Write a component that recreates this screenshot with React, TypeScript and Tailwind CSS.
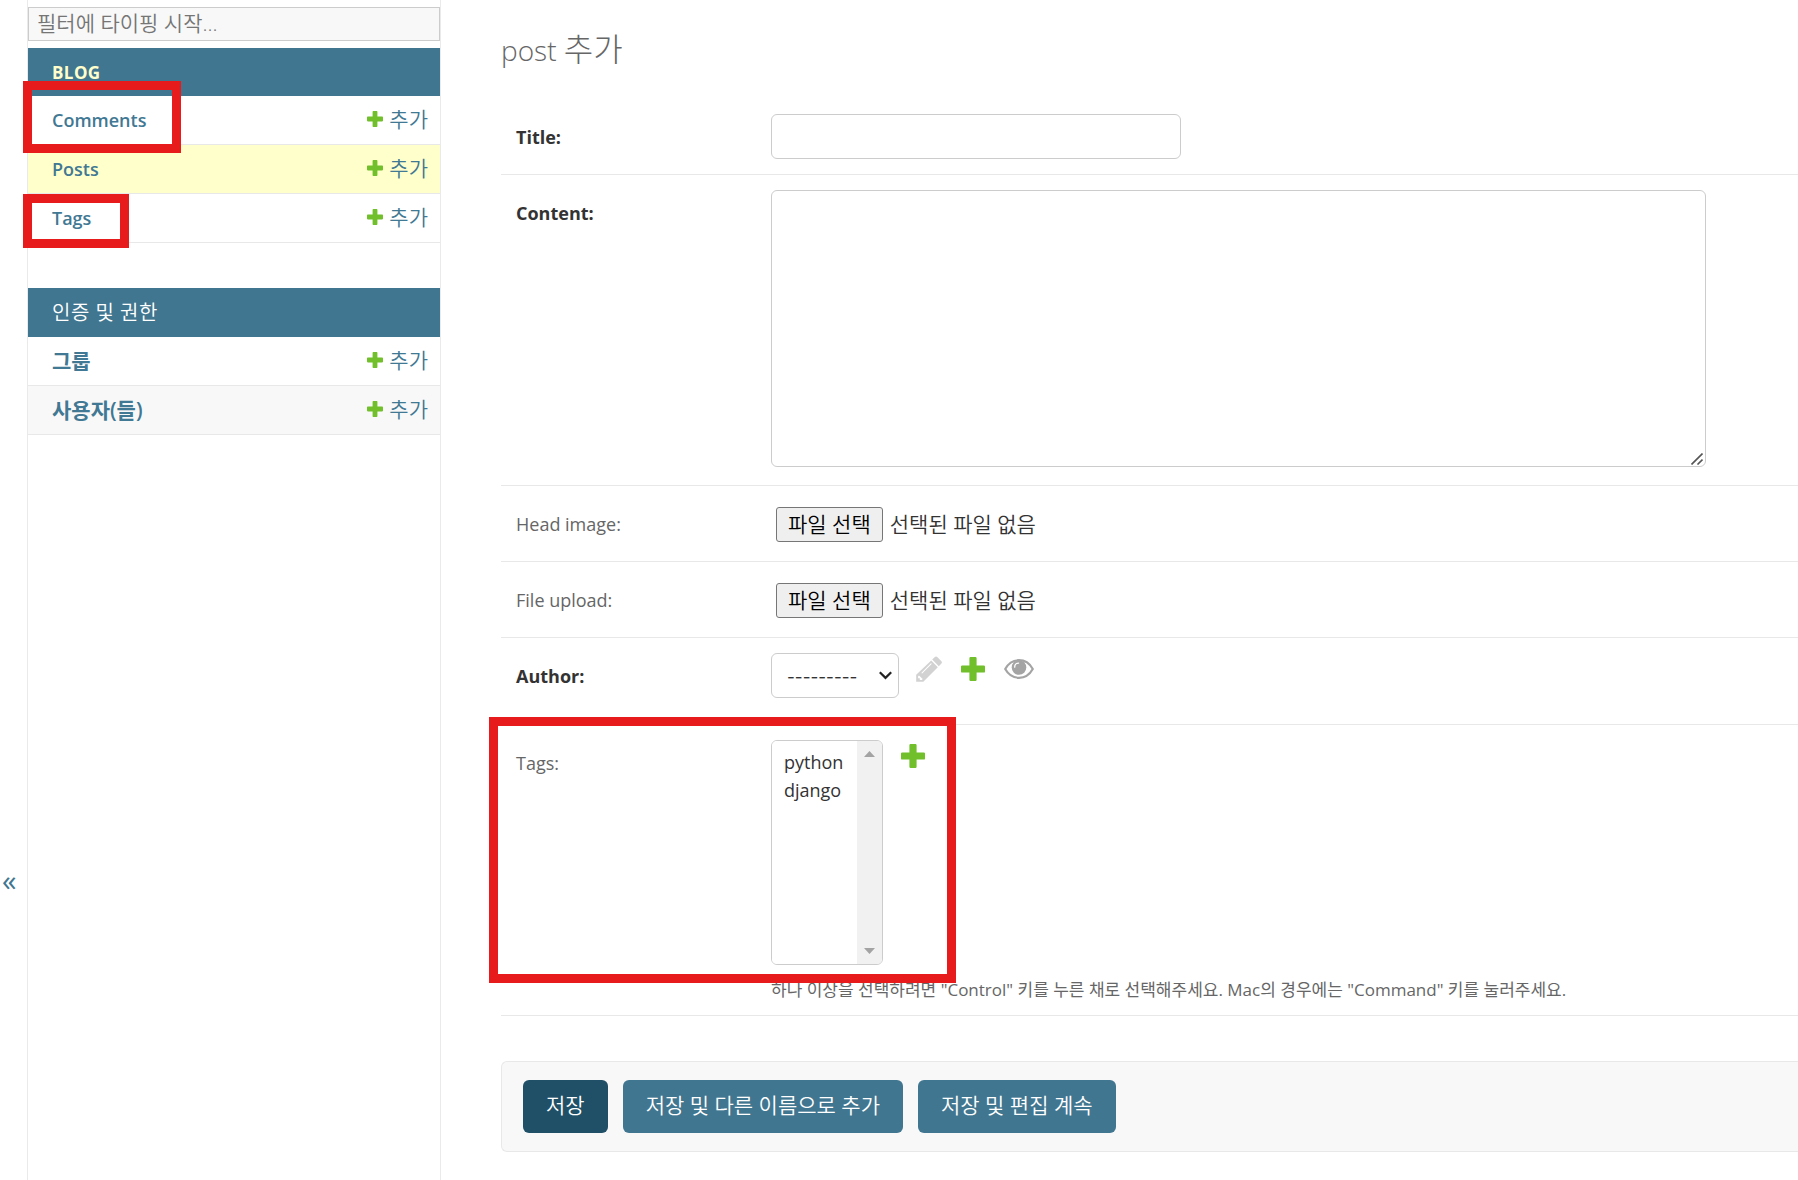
import { useRef, type ReactNode } from 'react';
import clsx from 'clsx';

function PlusIcon({ className }: { className?: string }) {
  return (
    <svg className={className} viewBox="0 0 24 24" fill="#70bf2b" aria-hidden="true">
      <path d="M9.6 0h4.8a1.2 1.2 0 0 1 1.2 1.2v7.2h7.2A1.2 1.2 0 0 1 24 9.6v4.8a1.2 1.2 0 0 1-1.2 1.2h-7.2v7.2a1.2 1.2 0 0 1-1.2 1.2H9.6a1.2 1.2 0 0 1-1.2-1.2v-7.2H1.2A1.2 1.2 0 0 1 0 14.4V9.6a1.2 1.2 0 0 1 1.2-1.2h7.2V1.2A1.2 1.2 0 0 1 9.6 0z" />
    </svg>
  );
}

function PencilIcon() {
  return (
    <svg className="h-[26px] w-[26px]" viewBox="0 0 26 26" aria-hidden="true">
      <path
        fill="#d2d2d2"
        d="M18.6 1.2a2 2 0 0 1 2.9 0l3.7 3.7a2 2 0 0 1 0 2.9l-2.4 2.4-6.6-6.6zM15.2 4.6l6.6 6.6L7.3 25.7H.2v-7zM3 19.4l-.9.9v2h1.7v1.6h2l.9-.9zM15.2 7.3c-.2 0-.4.1-.5.2l-9 9c-.5.6.2 1.2.7.7l9-9c.4-.4.2-.9-.2-.9z"
      />
    </svg>
  );
}

function EyeIcon() {
  return (
    <svg className="h-5 w-[30px]" viewBox="0 0 30 20" fill="none" aria-hidden="true">
      <path
        stroke="#a4a4a4"
        strokeWidth="2.2"
        strokeLinejoin="round"
        d="M1.2 10C4.2 4.7 9.2 1.2 15 1.2S25.8 4.7 28.8 10C25.8 15.3 20.8 18.8 15 18.8S4.2 15.3 1.2 10z"
      />
      <circle cx="15" cy="8.5" r="7.3" fill="#a4a4a4" />
      <path stroke="#fff" strokeWidth="1.3" strokeLinecap="round" d="M10.7 8.2c0-2.5 1.5-4 3.9-4.1" />
    </svg>
  );
}

// Red frame used to point at a part of the page
function Marker({ className }: { className: string }) {
  return (
    <span
      aria-hidden="true"
      className={clsx('pointer-events-none absolute z-10 border-9 border-[#e71b1b]', className)}
    />
  );
}

type Model = { name: string; korean?: boolean; current?: boolean; striped?: boolean; marker?: string };

function AppModule({ caption, current, models }: { caption: string; current?: boolean; models: Model[] }) {
  return (
    <table className="w-full border-separate border-spacing-0">
      <caption
        className={clsx(
          'bg-[#417690] pl-6 text-left leading-[49px] tracking-wide',
          current ? 'h-12 text-[17px] font-bold text-[#ffffcc]' : 'h-[49px] text-[20px] font-[350] text-white',
        )}
      >
        <a href="#app">{caption}</a>
      </caption>
      <tbody>
        {models.map((model) => (
          <tr
            key={model.name}
            className={clsx(
              'h-[49px] text-[#417893]',
              model.current && 'bg-[#ffffcc]',
              model.striped && 'bg-[#f8f8f8]',
            )}
          >
            <th
              scope="row"
              className={clsx(
                'relative border-b border-[#e8e8e8] p-0 pl-6 text-left leading-7 font-semibold',
                model.korean && 'text-[21px]',
              )}
            >
              <a href="#list">{model.name}</a>
              {model.marker && <Marker className={model.marker} />}
            </th>
            <td className="border-b border-[#e8e8e8] p-0 pr-3 pb-0.5">
              <a href="#add" className="flex items-center justify-end gap-[6px] text-[21px] leading-7 font-[350]">
                <PlusIcon className="h-4 w-4" />
                추가
              </a>
            </td>
          </tr>
        ))}
      </tbody>
    </table>
  );
}

function Sidebar() {
  return (
    <nav className="w-[414px] shrink-0 border-x border-[#eaeaea] pt-[7px]">
      <input
        type="search"
        aria-label="필터"
        placeholder="필터에 타이핑 시작..."
        className="mb-[7px] block h-[34px] w-full border border-[#ccc] bg-[#f8f8f8] px-2 pb-0.5 text-[21px] font-[350] placeholder:text-[#757575]"
      />
      <AppModule
        caption="BLOG"
        current
        models={[
          { name: 'Comments', marker: '-left-[5px] -top-[15px] h-[72px] w-[158px]' },
          { name: 'Posts', current: true },
          { name: 'Tags', marker: '-left-[5px] top-0 h-[54px] w-[106px]' },
        ]}
      />
      <div className="h-[45px]" />
      <AppModule
        caption="인증 및 권한"
        models={[
          { name: '그룹', korean: true },
          { name: '사용자(들)', korean: true, striped: true },
        ]}
      />
    </nav>
  );
}

type RowProps = { id: string; label: string; required?: boolean; className?: string; children: ReactNode };

function FormRow({ id, label, required, className, children }: RowProps) {
  return (
    <div className={clsx('relative flex border-b border-[#e8e8e8] pt-[15px] pl-[15px]', className)}>
      <label
        htmlFor={id}
        className={clsx('w-[255px] shrink-0 pt-[9px] leading-7', required ? 'font-bold text-[#333]' : 'text-[#666]')}
      >
        {label}
      </label>
      <div className="min-w-0 flex-1">{children}</div>
    </div>
  );
}

function FileField({ id }: { id: string }) {
  const input = useRef<HTMLInputElement>(null);
  return (
    <div className="flex items-center gap-[7px] pt-[6px] pl-[5px] text-[21px] font-[350] text-[#333]">
      <input ref={input} id={id} type="file" className="sr-only" />
      <button
        type="button"
        onClick={() => input.current?.click()}
        className="h-[35px] rounded-[3px] border border-[#767676] bg-[#efefef] px-[11px] pb-0.5 leading-7 text-black"
      >
        파일 선택
      </button>
      <span className="pb-0.5 leading-7">선택된 파일 없음</span>
    </div>
  );
}

function AuthorField() {
  return (
    <div className="flex items-start">
      <div className="relative">
        <select
          id="author"
          className="h-[45px] w-32 appearance-none rounded-md border border-[#ccc] bg-white pt-1 pl-[15px] font-[Inter,sans-serif] text-[17px] text-[#333]"
        >
          <option>---------</option>
        </select>
        <svg
          className="pointer-events-none absolute top-[18px] right-[7px] h-[9px] w-[13px]"
          viewBox="0 0 13 9"
          fill="none"
          stroke="#222"
          strokeWidth="2.2"
          aria-hidden="true"
        >
          <path d="M.8 1.2l5.7 5.7 5.7-5.7" />
        </svg>
      </div>
      <div className="flex items-center gap-[19px] pt-[3px] pl-[17px]">
        <button type="button" aria-label="author 변경" disabled>
          <PencilIcon />
        </button>
        <a href="#add-author" aria-label="author 추가">
          <PlusIcon className="h-6 w-6" />
        </a>
        <button type="button" aria-label="author 보기" disabled>
          <EyeIcon />
        </button>
      </div>
    </div>
  );
}

function TagsField() {
  return (
    <>
      <div className="flex items-start gap-[18px]">
        <div className="flex h-[225px] w-28 overflow-hidden rounded-md border border-[#ccc]">
          <select
            id="tags"
            multiple
            className="min-w-0 flex-1 appearance-none overflow-hidden bg-white pt-[9px] text-[#333]"
          >
            <option className="h-7 px-3 leading-7">python</option>
            <option className="h-7 px-3 leading-7">django</option>
          </select>
          <div className="flex w-[25px] flex-col items-center justify-between bg-[#f1f1f1] py-[10px]" aria-hidden="true">
            <svg className="h-[6px] w-[11px]" viewBox="0 0 11 6" fill="#a3a3a3">
              <path d="M5.5 0L11 6H0z" />
            </svg>
            <svg className="h-[6px] w-[11px]" viewBox="0 0 11 6" fill="#a3a3a3">
              <path d="M5.5 6L0 0h11z" />
            </svg>
          </div>
        </div>
        <a href="#add-tag" aria-label="tag 추가" className="pt-1">
          <PlusIcon className="h-6 w-6" />
        </a>
      </div>
      <p className="pt-[12px] text-[17px] leading-[25px] text-[#666]">
        하나 이상을 선택하려면 "Control" 키를 누른 채로 선택해주세요. Mac의 경우에는 "Command" 키를 눌러주세요.
      </p>
    </>
  );
}

function PostForm() {
  return (
    <form onSubmit={(e) => e.preventDefault()}>
      <FormRow id="title" label="Title:" required className="pb-[15px]">
        <input id="title" type="text" className="block h-[45px] w-[410px] rounded-md border border-[#ccc] px-2" />
      </FormRow>
      <FormRow id="content" label="Content:" required className="pb-[18px]">
        <div className="relative w-[935px] max-w-full">
          <textarea id="content" className="block h-[277px] w-full resize-none rounded-md border border-[#ccc] p-2" />
          <svg
            className="pointer-events-none absolute right-[3px] bottom-[2px] h-3 w-3"
            viewBox="0 0 12 12"
            stroke="#555"
            strokeWidth="1.6"
            aria-hidden="true"
          >
            <path d="M.5 11.5l11-11M6.5 11.5l5-5" />
          </svg>
        </div>
      </FormRow>
      <FormRow id="head-image" label="Head image:" className="pb-[19px]">
        <FileField id="head-image" />
      </FormRow>
      <FormRow id="file-upload" label="File upload:" className="pb-[19px]">
        <FileField id="file-upload" />
      </FormRow>
      <FormRow id="author" label="Author:" required className="pb-[26px]">
        <AuthorField />
      </FormRow>
      <FormRow id="tags" label="Tags:" className="pb-[13px]">
        <TagsField />
        <Marker className="-top-2 -left-3 h-[266px] w-[467px]" />
      </FormRow>
      <div className="mt-[45px] flex gap-[15px] rounded-l-md border border-r-0 border-[#e8e8e8] bg-[#f8f8f8] px-[21px] py-[18px] text-[21px] font-[350] text-white">
        <button type="submit" className="h-[53px] rounded-md bg-[#205067] px-[23px] pb-0.5">
          저장
        </button>
        <button type="submit" className="h-[53px] rounded-md bg-[#417690] px-[23px] pb-0.5">
          저장 및 다른 이름으로 추가
        </button>
        <button type="submit" className="h-[53px] rounded-md bg-[#417690] px-[23px] pb-0.5">
          저장 및 편집 계속
        </button>
      </div>
    </form>
  );
}

export default function App() {
  return (
    <div className="flex min-h-screen bg-white font-['Open_Sans','Noto_Sans_CJK_KR',sans-serif] text-[18px] text-[#333]">
      <button
        type="button"
        aria-label="내비게이션 전환"
        className="flex w-[27px] shrink-0 items-end pb-[288px] pl-[2px] text-[29px] leading-6 text-[#417690]"
      >
        «
      </button>
      <Sidebar />
      <main className="min-w-0 flex-1 pt-[30px] pb-7 pl-[60px]">
        <h1 className="mb-[29px] text-[28px] leading-10 font-light text-[#666]">
          post <span className="text-[32px] leading-8">추가</span>
        </h1>
        <PostForm />
      </main>
    </div>
  );
}
